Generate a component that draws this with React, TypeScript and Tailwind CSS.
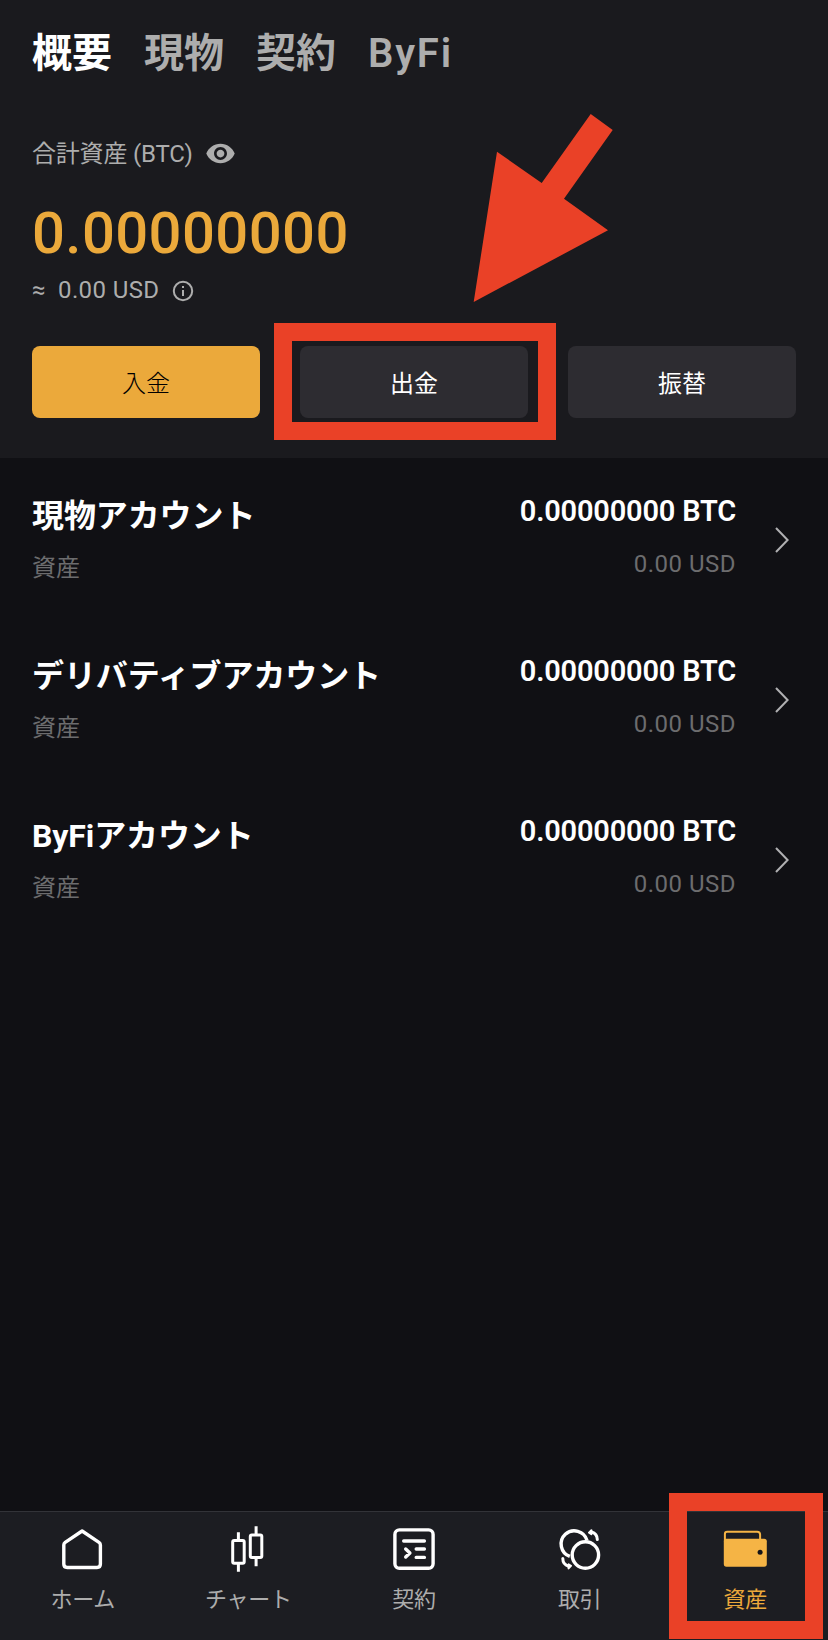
import { ReactNode } from "react";
import { MdVisibility } from "react-icons/md";
import clsx from "clsx";

const tabs = ["概要", "現物", "契約", "ByFi"];

const accounts = [
  { name: "現物アカウント", btc: "0.00000000 BTC", usd: "0.00 USD" },
  { name: "デリバティブアカウント", btc: "0.00000000 BTC", usd: "0.00 USD" },
  { name: "ByFiアカウント", btc: "0.00000000 BTC", usd: "0.00 USD" },
];

function NavSvg({ children }: { children: ReactNode }) {
  return (
    <svg
      viewBox="0 0 48 48"
      className="block h-12 w-12"
      fill="none"
      stroke="currentColor"
      strokeWidth={3.4}
      strokeLinecap="round"
      strokeLinejoin="round"
    >
      {children}
    </svg>
  );
}

function HomeIcon() {
  return (
    <NavSvg>
      <path d="M23.1 6 L40 17.3 Q41.4 18.3 41.4 19.9 V39 Q41.4 42.5 38 42.5 H8.2 Q4.8 42.5 4.8 39 V19.9 Q4.8 18.3 6.2 17.3 Z" />
    </NavSvg>
  );
}

function CandlesIcon() {
  return (
    <NavSvg>
      <g strokeWidth={3} strokeLinecap="butt">
        <rect x="8.7" y="15.6" width="11.5" height="22.7" rx="1.5" />
        <path d="M14.4 7.2v8M14.4 39v7.8" />
        <rect x="26.3" y="9.9" width="11.5" height="22.7" rx="1.5" />
        <path d="M32.1 1.2v8M32.1 33.5v7.8" />
      </g>
    </NavSvg>
  );
}

function ContractIcon() {
  return (
    <NavSvg>
      <rect x="4.9" y="4.9" width="38.2" height="38.4" rx="4.5" />
      <path d="M13.7 16h20.7M26.2 24h8.2M26.2 32.4h8.2M15.7 24l4.2 4-4.2 4" />
    </NavSvg>
  );
}

function TradeIcon() {
  return (
    <NavSvg>
      <circle cx="29.4" cy="30" r="13.2" />
      <path d="M31 15.4 A13.2 13.2 0 1 0 13.8 31.4" strokeLinecap="butt" />
      <path d="M35.5 7 Q41.3 8.6 41.3 14.6" strokeWidth={3} />
      <path d="M35.4 5.2v4l-2.4-1.6z" strokeWidth={2} fill="currentColor" />
      <path d="M6.8 33.6 Q6.8 39.6 12.6 41.2" strokeWidth={3} />
      <path d="M12.6 39.4v4l2.4-2.6z" strokeWidth={2} fill="currentColor" />
    </NavSvg>
  );
}

function WalletIcon() {
  return (
    <NavSvg>
      <g className="text-[#f5b445]">
        <path
          d="M3.9 16 V9 Q3.9 6.7 6.2 6.7 H36.2 Q39.1 6.7 39.1 9.6 V15"
          stroke="currentColor"
          strokeWidth={2}
        />
        <rect
          x="2.8"
          y="13.7"
          width="43"
          height="28"
          rx="2.6"
          fill="currentColor"
          stroke="none"
        />
      </g>
      <circle cx="39.1" cy="27.3" r="2.5" fill="#141418" stroke="none" />
    </NavSvg>
  );
}

const navItems = [
  { label: "ホーム", icon: <HomeIcon /> },
  { label: "チャート", icon: <CandlesIcon /> },
  { label: "契約", icon: <ContractIcon /> },
  { label: "取引", icon: <TradeIcon /> },
  { label: "資産", icon: <WalletIcon />, active: true },
];

function AccountRow({ name, btc, usd }: (typeof accounts)[number]) {
  return (
    <div className="flex h-40 items-start pl-8 pr-[39px] pt-[33px]">
      <div className="flex-1">
        <div className="pt-px text-[32px] font-bold leading-[48px] tracking-[-0.1px]">
          {name}
        </div>
        <div className="mt-3 text-2xl leading-8 text-[#6c6c6e]">資産</div>
      </div>
      <div className="text-right">
        <div className="text-[29px] font-semibold leading-10 tracking-[-0.2px]">
          {btc}
        </div>
        <div className="mt-[17px] text-2xl leading-8 tracking-[0.5px] text-[#6c6c6e]">
          {usd}
        </div>
      </div>
      <svg
        viewBox="0 0 14 26"
        className="ml-[39px] mt-9 h-[26px] w-[14px]"
        fill="none"
        stroke="#b0b0b2"
        strokeWidth={2}
      >
        <path d="M1 1 L12.6 13 L1 25" />
      </svg>
    </div>
  );
}

export default function App() {
  return (
    <div className="relative flex h-[1640px] w-[828px] flex-col overflow-hidden bg-[#101014] font-[Roboto,'Noto_Sans_CJK_JP',sans-serif] text-white">
      <header className="h-[458px] bg-[#1a1a1e] px-8 pt-[26px]">
        <nav className="flex gap-8 text-[40px] font-bold leading-[56px] text-[#adadad]">
          {tabs.map((tab, i) => (
            <span
              key={tab}
              className={clsx(
                i === 0 && "text-white",
                tab === "ByFi" && "font-semibold tracking-[1.8px]",
              )}
            >
              {tab}
            </span>
          ))}
        </nav>

        <div className="mt-14 flex h-8 items-center text-2xl leading-8 text-[#adadad]">
          <span className="tracking-[-0.2px]">合計資産 (BTC)</span>
          <MdVisibility className="mb-0.5 ml-3 h-[31px] w-[31px]" />
        </div>

        <div className="mt-7 text-[58px] font-medium leading-[70px] tracking-[0.4px] text-[#eba93b]">
          0.00000000
        </div>

        <div className="mt-1.5 flex h-8 items-center text-2xl leading-8 text-[#adadad]">
          <span className="w-[26px]">≈</span>
          <span className="tracking-[0.4px]">0.00 USD</span>
          <svg viewBox="0 0 22 22" className="ml-3 mt-0.5 h-[22px] w-[22px]" fill="none">
            <circle cx="11" cy="11" r="9.2" stroke="currentColor" strokeWidth={2} />
            <path d="M11 10v6M11 6v2" stroke="currentColor" strokeWidth={2} />
          </svg>
        </div>

        <div className="mt-10 grid h-[72px] grid-cols-3 gap-10 text-2xl">
          <button className="rounded-lg bg-[#eba93b] pt-[3px] font-light text-black">
            入金
          </button>
          <button className="rounded-lg bg-[#2d2c31] pt-[3px]">出金</button>
          <button className="rounded-lg bg-[#2d2c31] pt-[3px]">振替</button>
        </div>
      </header>

      <main className="flex-1">
        {accounts.map((account) => (
          <AccountRow key={account.name} {...account} />
        ))}
      </main>

      <footer className="grid h-[129px] grid-cols-5 border-t border-[#323338] bg-[#1c1d22] pt-[13px]">
        {navItems.map(({ label, icon, active }) => (
          <div key={label} className="flex flex-col items-center">
            {icon}
            <span
              className={clsx(
                "mt-[11px] text-[22px] leading-8 tracking-[-0.3px]",
                active ? "text-[#eba93b]" : "text-[#adadad]",
              )}
            >
              {label}
            </span>
          </div>
        ))}
      </footer>

      {/* highlight frames and arrow */}
      <div className="absolute left-[274px] top-[323px] h-[117px] w-[282px] border-[18px] border-[#ea4127]" />
      <div className="absolute left-[669px] top-[1493px] h-[146px] w-[154px] border-[18px] border-[#ea4127]" />
      <svg
        viewBox="470 110 150 196"
        className="absolute left-[470px] top-[110px] h-[196px] w-[150px]"
      >
        <polygon
          points="590.7,114 612.7,130 564,198.7 608,230.3 473.7,302 497,151.7 541.7,183"
          fill="#ea4127"
        />
      </svg>
    </div>
  );
}
